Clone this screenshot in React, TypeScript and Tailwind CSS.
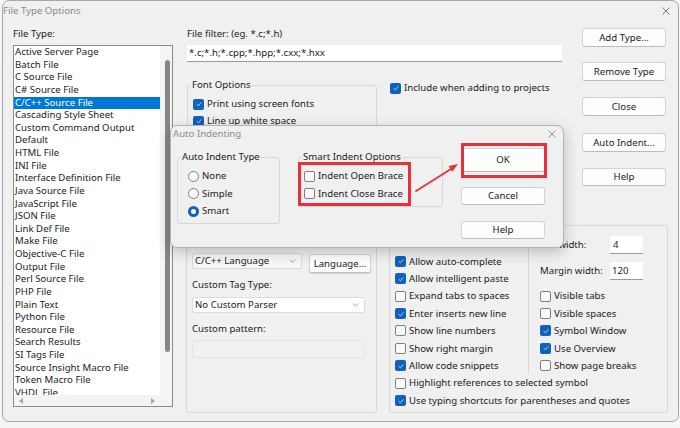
import React from "react";

const fileTypes = [
  "Active Server Page",
  "Batch File",
  "C Source File",
  "C# Source File",
  "C/C++ Source File",
  "Cascading Style Sheet",
  "Custom Command Output",
  "Default",
  "HTML File",
  "INI File",
  "Interface Definition File",
  "Java Source File",
  "JavaScript File",
  "JSON File",
  "Link Def File",
  "Make File",
  "Objective-C File",
  "Output File",
  "Perl Source File",
  "PHP File",
  "Plain Text",
  "Python File",
  "Resource File",
  "Search Results",
  "SI Tags File",
  "Source Insight Macro File",
  "Token Macro File",
  "VHDL File",
];

function Check({ checked }: { checked?: boolean }) {
  return (
    <span
      className={`w-[11px] h-[11px] shrink-0 rounded-[2px] flex items-center justify-center ${
        checked ? "bg-[#0f62c0]" : "bg-[#f9f9f9] border border-[#7f7f7f]"
      }`}
    >
      {checked && (
        <svg viewBox="0 0 10 10" className="w-[8px] h-[8px]">
          <path d="M2.2 5.2 L4.2 7.2 L7.9 3" stroke="#dbe8f7" strokeWidth="1" fill="none" />
        </svg>
      )}
    </span>
  );
}

function CheckRow({ checked, label, className }: { checked?: boolean; label: string; className?: string }) {
  return (
    <div className={`flex items-center ${className ?? ""}`}>
      <Check checked={checked} />
      <span className="ml-[3px] leading-none whitespace-nowrap">{label}</span>
    </div>
  );
}

function Radio({ checked }: { checked?: boolean }) {
  return checked ? (
    <span className="w-[11px] h-[11px] shrink-0 rounded-full bg-[#0f62c0] flex items-center justify-center">
      <span className="w-[5px] h-[5px] rounded-full bg-white" />
    </span>
  ) : (
    <span className="w-[11px] h-[11px] shrink-0 rounded-full bg-[#f9f9f9] border border-[#7f7f7f]" />
  );
}

function Btn({ children, className }: { children: React.ReactNode; className?: string }) {
  return (
    <div
      className={`flex items-center justify-center bg-[#fdfdfd] border border-[#d3d3d3] border-b-[#bcbcbc] rounded-[3px] leading-none whitespace-nowrap ${
        className ?? ""
      }`}
    >
      {children}
    </div>
  );
}

function GroupBox({
  title,
  className,
  children,
}: {
  title?: string;
  className?: string;
  children?: React.ReactNode;
}) {
  return (
    <div className={`relative border border-[#d7d7d7] rounded-[3px] ${className ?? ""}`}>
      {title && (
        <span className="absolute -top-[8px] left-[3px] px-[1px] bg-[#f0f0f0] leading-[14px] whitespace-nowrap">
          {title}
        </span>
      )}
      {children}
    </div>
  );
}

function XIcon({ color }: { color: string }) {
  return (
    <svg viewBox="0 0 8 8" className="w-[8px] h-[8px]">
      <path d="M0.5 0.5 L7.5 7.5 M7.5 0.5 L0.5 7.5" stroke={color} strokeWidth="0.9" />
    </svg>
  );
}

function Chevron() {
  return (
    <svg viewBox="0 0 8 5" className="w-[7px] h-[4px]">
      <path d="M0.5 0.5 L4 4 L7.5 0.5" stroke="#7a7a7a" strokeWidth="0.9" fill="none" />
    </svg>
  );
}

export default function App() {
  return (
    <div className="relative w-[680px] h-[428px] overflow-hidden bg-[#f5f5f5] font-['Noto_Sans',sans-serif] text-[9.65px] text-[#1b1b1b]">
      {/* ===== File Type Options window ===== */}
      <div className="ml-[2px] w-[677px] h-[422px] flex flex-col bg-[#f0f0f0] border border-[#a8a8a8] rounded-[7px]">
        <div className="h-[19px] flex items-center justify-between pr-[8px]">
          <span className="text-[#8a8a8a] leading-none">File Type Options</span>
          <XIcon color="#707070" />
        </div>

        <div className="flex">
          {/* file type list */}
          <div className="ml-[10px] w-[160px] flex flex-col">
            <div className="h-[25px] pt-[7px] leading-[14px]">File Type:</div>
            <div className="h-[362px] flex flex-col border border-[#8c8c8c] bg-white">
              <div className="h-[349px] flex">
                <div className="flex-1 overflow-hidden">
                  {fileTypes.map((t) => (
                    <div
                      key={t}
                      className={`h-[12.63px] leading-[12.63px] pl-[1px] whitespace-nowrap ${
                        t === "C/C++ Source File" ? "bg-[#0078d7] text-white" : ""
                      }`}
                    >
                      {t}
                    </div>
                  ))}
                </div>
                <div className="w-[12px] pt-[14px] pl-[5px] bg-[#f4f4f4]">
                  <div className="w-[5px] h-[292px] rounded-full bg-[#878787]" />
                </div>
              </div>
              <div className="h-[11px] flex bg-[#f4f4f4]">
                <div className="flex-1 flex items-center justify-between px-[5px]">
                  <svg viewBox="0 0 4 6" className="w-[4px] h-[6px]">
                    <path d="M4 0 L0 3 L4 6 Z" fill="#a3a3a3" />
                  </svg>
                  <svg viewBox="0 0 4 6" className="w-[4px] h-[6px]">
                    <path d="M0 0 L4 3 L0 6 Z" fill="#a3a3a3" />
                  </svg>
                </div>
                <div className="w-[12px]" />
              </div>
            </div>
          </div>

          {/* right side */}
          <div className="ml-[14px] w-[481px] flex flex-col">
            <div className="h-[205px] flex">
              <div className="w-[375px] flex flex-col">
                <div className="h-[25px] pt-[7px] leading-[14px]">File filter: (eg. *.c;*.h)</div>
                <div className="h-[17px] pl-[2px] flex items-center bg-white border-b border-[#9a9a9a] leading-none">
                  *.c;*.h;*.cpp;*.hpp;*.cxx;*.hxx
                </div>
                <div className="mt-[20px] flex items-start">
                  <GroupBox title="Font Options" className="mt-[3px] w-[190px] h-[125px] pt-[9.5px] pl-[5px]">
                    <CheckRow checked label="Print using screen fonts" className="h-[17px]" />
                    <CheckRow checked label="Line up white space" className="h-[17px]" />
                    <CheckRow label="Visible tabs" className="h-[17px]" />
                  </GroupBox>
                  <CheckRow checked label="Include when adding to projects" className="ml-[13px] h-[12px]" />
                </div>
              </div>
              <div className="ml-[20px] w-[84px] flex flex-col">
                <Btn className="mt-[8px] h-[19px]">Add Type...</Btn>
                <Btn className="mt-[15px] h-[19px]">Remove Type</Btn>
                <Btn className="mt-[16px] h-[19px]">Close</Btn>
                <Btn className="mt-[17px] h-[19px]">Auto Indent...</Btn>
                <Btn className="mt-[16px] h-[18px]">Help</Btn>
              </div>
            </div>

            <div className="flex">
              {/* parsing group */}
              <GroupBox className="-ml-[1px] w-[191px] h-[188px] pl-[5px] flex flex-col">
                <div className="mt-[5px] h-[14px] leading-[14px]">Language:</div>
                <div className="mt-[8px] flex items-start">
                  <div className="w-[110px] h-[16px] flex items-center justify-between pl-[2px] pr-[5px] bg-[#f6f6f6] border border-[#d8d8d8] rounded-[2px] leading-none">
                    <span>C/C++ Language</span>
                    <Chevron />
                  </div>
                  <Btn className="ml-[7px] mt-[1px] w-[62px] h-[19px] bg-[#f7f7f7] shadow-[0_1px_1px_rgba(0,0,0,0.12)]">
                    Language...
                  </Btn>
                </div>
                <div className="mt-[5px] h-[14px] leading-[14px]">Custom Tag Type:</div>
                <div className="mt-[5px] w-[173px] h-[16px] flex items-center justify-between pl-[2px] pr-[5px] bg-white border border-[#dcdcdc] rounded-[2px] leading-none">
                  <span>No Custom Parser</span>
                  <Chevron />
                </div>
                <div className="mt-[9px] h-[14px] leading-[14px]">Custom pattern:</div>
                <div className="mt-[4px] w-[173px] h-[18px] border border-[#e3e3e3] rounded-[2px] bg-[#f0f0f0]" />
              </GroupBox>

              {/* editing options group */}
              <GroupBox className="ml-[12px] w-[279px] h-[188px] pt-[9.3px] flex flex-col">
                <div className="flex">
                  <div className="w-[138px] pl-[5px]">
                    <CheckRow label="Word wrap" className="h-[17.4px] pb-[4px]" />
                    <CheckRow checked label="Allow auto-complete" className="h-[17.4px]" />
                    <CheckRow checked label="Allow intelligent paste" className="h-[17.4px]" />
                    <CheckRow label="Expand tabs to spaces" className="h-[17.4px]" />
                    <CheckRow checked label="Enter inserts new line" className="h-[17.4px]" />
                    <CheckRow label="Show line numbers" className="h-[17.4px]" />
                    <CheckRow label="Show right margin" className="h-[17.4px]" />
                    <CheckRow checked label="Allow code snippets" className="h-[17.4px]" />
                  </div>
                  <div className="w-px bg-[#d7d7d7]" />
                  <div className="flex-1 pl-[11px]">
                    <div className="h-[52.2px] pt-[0.7px]">
                      <div className="h-[18px] flex items-center">
                        <span className="w-[70px] leading-none">Tab width:</span>
                        <span className="w-[33px] h-[18px] pl-[3px] flex items-center bg-white border-b border-[#9a9a9a] leading-none">
                          4
                        </span>
                      </div>
                      <div className="mt-[8px] h-[18px] flex items-center">
                        <span className="w-[70px] leading-none">Margin width:</span>
                        <span className="w-[33px] h-[18px] pl-[2px] flex items-center bg-white border-b border-[#9a9a9a] leading-none">
                          120
                        </span>
                      </div>
                    </div>
                    <CheckRow label="Visible tabs" className="h-[17.4px]" />
                    <CheckRow label="Visible spaces" className="h-[17.4px]" />
                    <CheckRow checked label="Symbol Window" className="h-[17.4px]" />
                    <CheckRow checked label="Use Overview" className="h-[17.4px]" />
                    <CheckRow label="Show page breaks" className="h-[17.4px]" />
                  </div>
                </div>
                <div className="pl-[5px]">
                  <CheckRow label="Highlight references to selected symbol" className="h-[17.4px]" />
                  <CheckRow checked label="Use typing shortcuts for parentheses and quotes" className="h-[17.4px]" />
                </div>
              </GroupBox>
            </div>
          </div>
        </div>
      </div>

      {/* ===== Auto Indenting dialog (overlay) ===== */}
      <div className="absolute left-[170px] top-[125px] w-[394px] h-[123px] flex flex-col bg-[#f0f0f0] border border-[#b4b4b4] rounded-[7px] shadow-[0_4px_14px_rgba(0,0,0,0.22)]">
        <div className="h-[15px] pl-[2px] pr-[7px] flex items-center justify-between">
          <span className="text-[#8a8a8a] leading-none">Auto Indenting</span>
          <XIcon color="#8a8a8a" />
        </div>
        <div className="flex items-start">
          <GroupBox title="Auto Indent Type" className="ml-[6px] mt-[16px] w-[103px] h-[67px] pt-[9.25px] pl-[10px]">
            {[
              ["None", false],
              ["Simple", false],
              ["Smart", true],
            ].map(([l, c]) => (
              <div key={l as string} className="h-[17.5px] flex items-center">
                <Radio checked={c as boolean} />
                <span className="ml-[3px] leading-none">{l as string}</span>
              </div>
            ))}
          </GroupBox>
          <GroupBox title="Smart Indent Options" className="ml-[18px] mt-[16px] w-[145px] h-[50px] pt-[9.25px] pl-[5px]">
            <CheckRow label="Indent Open Brace" className="h-[17.5px]" />
            <CheckRow label="Indent Close Brace" className="h-[17.5px]" />
          </GroupBox>
          <div className="ml-[18px] w-[84px] flex flex-col">
            <Btn className="mt-[7px] h-[24px]">OK</Btn>
            <Btn className="mt-[15px] h-[18px]">Cancel</Btn>
            <Btn className="mt-[16px] h-[18px]">Help</Btn>
          </div>
        </div>
      </div>

      {/* ===== red annotations ===== */}
      <div className="absolute left-[298px] top-[162px] w-[113px] h-[44px] border-[3px] border-[#e8303a]" />
      <div className="absolute left-[461px] top-[143px] w-[86px] h-[35px] border-[3px] border-[#e8303a]" />
      <svg className="absolute left-[410px] top-[158px] w-[54px] h-[38px]" viewBox="0 0 54 38">
        <path d="M6 33 L41 11" stroke="#e8303a" strokeWidth="1.8" strokeLinecap="round" />
        <path d="M48 6 L42.3 13.8 L38.5 8 Z" fill="#e8303a" />
      </svg>
    </div>
  );
}
